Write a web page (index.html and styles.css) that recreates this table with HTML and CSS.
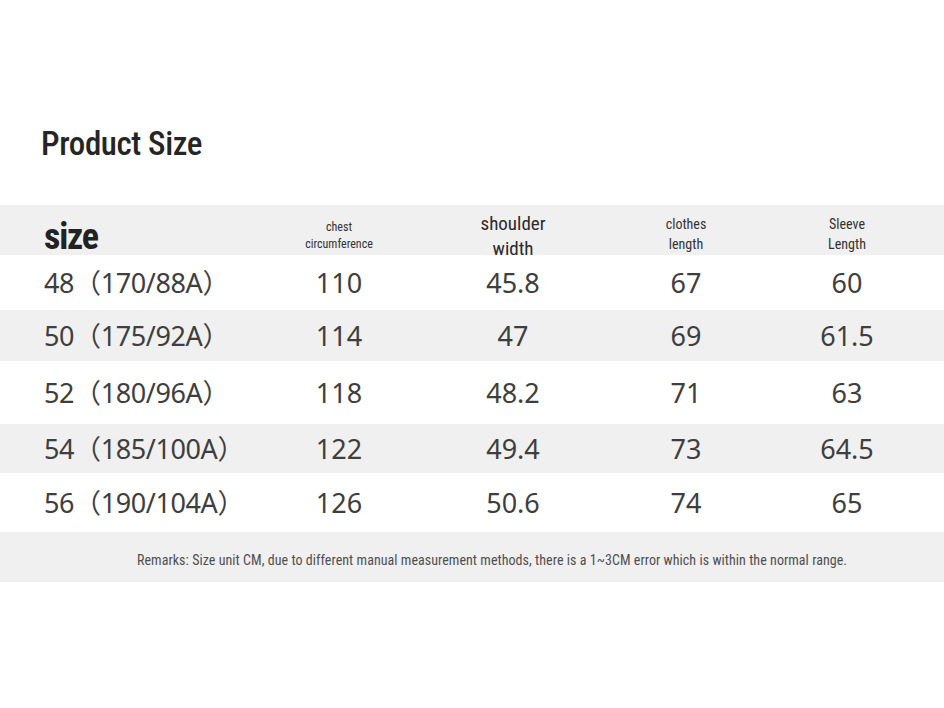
FILE: index.html
```html
<!DOCTYPE html>
<html lang="en">
<head>
<meta charset="utf-8">
<title>Product Size</title>
<link rel="stylesheet" href="styles.css">
</head>
<body>
<div class="page">
  <h1 class="title">Product Size</h1>
  <div class="table">
    <div class="row head">
      <div class="cell first size-label">size</div>
      <div class="cell lbl lbl-chest">chest<br>circumference</div>
      <div class="cell lbl lbl-shoulder">shoulder<br>width</div>
      <div class="cell lbl lbl-mid">clothes<br>length</div>
      <div class="cell lbl lbl-mid">Sleeve<br>Length</div>
    </div>
    <div class="row data white r1">
      <div class="cell first">48（170/88A）</div>
      <div class="cell">110</div>
      <div class="cell">45.8</div>
      <div class="cell">67</div>
      <div class="cell">60</div>
    </div>
    <div class="row data gray r2">
      <div class="cell first">50（175/92A）</div>
      <div class="cell">114</div>
      <div class="cell">47</div>
      <div class="cell">69</div>
      <div class="cell">61.5</div>
    </div>
    <div class="row data white r3">
      <div class="cell first">52（180/96A）</div>
      <div class="cell">118</div>
      <div class="cell">48.2</div>
      <div class="cell">71</div>
      <div class="cell">63</div>
    </div>
    <div class="row data gray r4">
      <div class="cell first">54（185/100A）</div>
      <div class="cell">122</div>
      <div class="cell">49.4</div>
      <div class="cell">73</div>
      <div class="cell">64.5</div>
    </div>
    <div class="row data white r5">
      <div class="cell first">56（190/104A）</div>
      <div class="cell">126</div>
      <div class="cell">50.6</div>
      <div class="cell">74</div>
      <div class="cell">65</div>
    </div>
    <div class="remarks">Remarks: Size unit CM, due to different manual measurement methods, there is a 1~3CM error which is within the normal range.</div>
  </div>
</div>
</body>
</html>
```

FILE: styles.css
```css
html, body {
  margin: 0;
  padding: 0;
  background: #ffffff;
}

.page {
  width: 944px;
  height: 708px;
  overflow: hidden;
}

.title {
  margin: 0 0 41px 0;
  padding: 124px 0 0 41px;
  font-family: "Roboto Condensed", "Liberation Sans Narrow", "DejaVu Sans Condensed", Roboto, sans-serif;
  font-stretch: condensed;
  font-weight: 500;
  font-size: 33px;
  letter-spacing: -0.4px;
  line-height: 40px;
  color: #252525;
}

.table {
  display: flex;
  flex-direction: column;
}

.row {
  display: grid;
  grid-template-columns: 220px 150px 198px 148px 174px;
  padding-left: 44px;
  align-items: center;
}

.head {
  height: 50px;
  background: #f0f0f0;
  padding-top: 6px;
  box-sizing: border-box;
}

.cell {
  text-align: center;
}

.cell.first {
  text-align: left;
}

.data .cell.first {
  letter-spacing: -0.4px;
}

.size-label {
  font-family: "Roboto Condensed", "Liberation Sans Narrow", "DejaVu Sans Condensed", Roboto, sans-serif;
  font-stretch: condensed;
  font-weight: 700;
  font-size: 36px;
  letter-spacing: -1.2px;
  line-height: 40px;
  color: #222222;
  padding-top: 2px;
}

.lbl {
  font-family: "Roboto Condensed", "Liberation Sans Narrow", "DejaVu Sans Condensed", Roboto, sans-serif;
  font-stretch: condensed;
  color: #333333;
}

.lbl-chest {
  font-size: 12px;
  line-height: 17px;
}

.lbl-shoulder {
  font-size: 19px;
  line-height: 25px;
  font-weight: 400;
  color: #2a2a2a;
}

.lbl-mid {
  font-size: 14px;
  line-height: 20px;
  padding-bottom: 5px;
}

.data {
  font-family: "Noto Sans", "Noto Sans CJK SC", sans-serif;
  font-size: 27px;
  line-height: 32px;
  color: #3e3e3e;
}

.white { background: #ffffff; }
.gray { background: #f0f0f0; }

.r1 { height: 55px; }
.r2 { height: 51px; }
.r3 { height: 63px; }
.r4 { height: 49px; }
.r5 { height: 59px; }

.remarks {
  height: 50px;
  box-sizing: border-box;
  padding-top: 6px;
  background: #f0f0f0;
  display: flex;
  align-items: center;
  padding-left: 137px;
  font-family: "Roboto Condensed", "Liberation Sans Narrow", "DejaVu Sans Condensed", Roboto, sans-serif;
  font-stretch: condensed;
  font-size: 14px;
  letter-spacing: 0.05px;
  color: #4f4f4f;
}
```
